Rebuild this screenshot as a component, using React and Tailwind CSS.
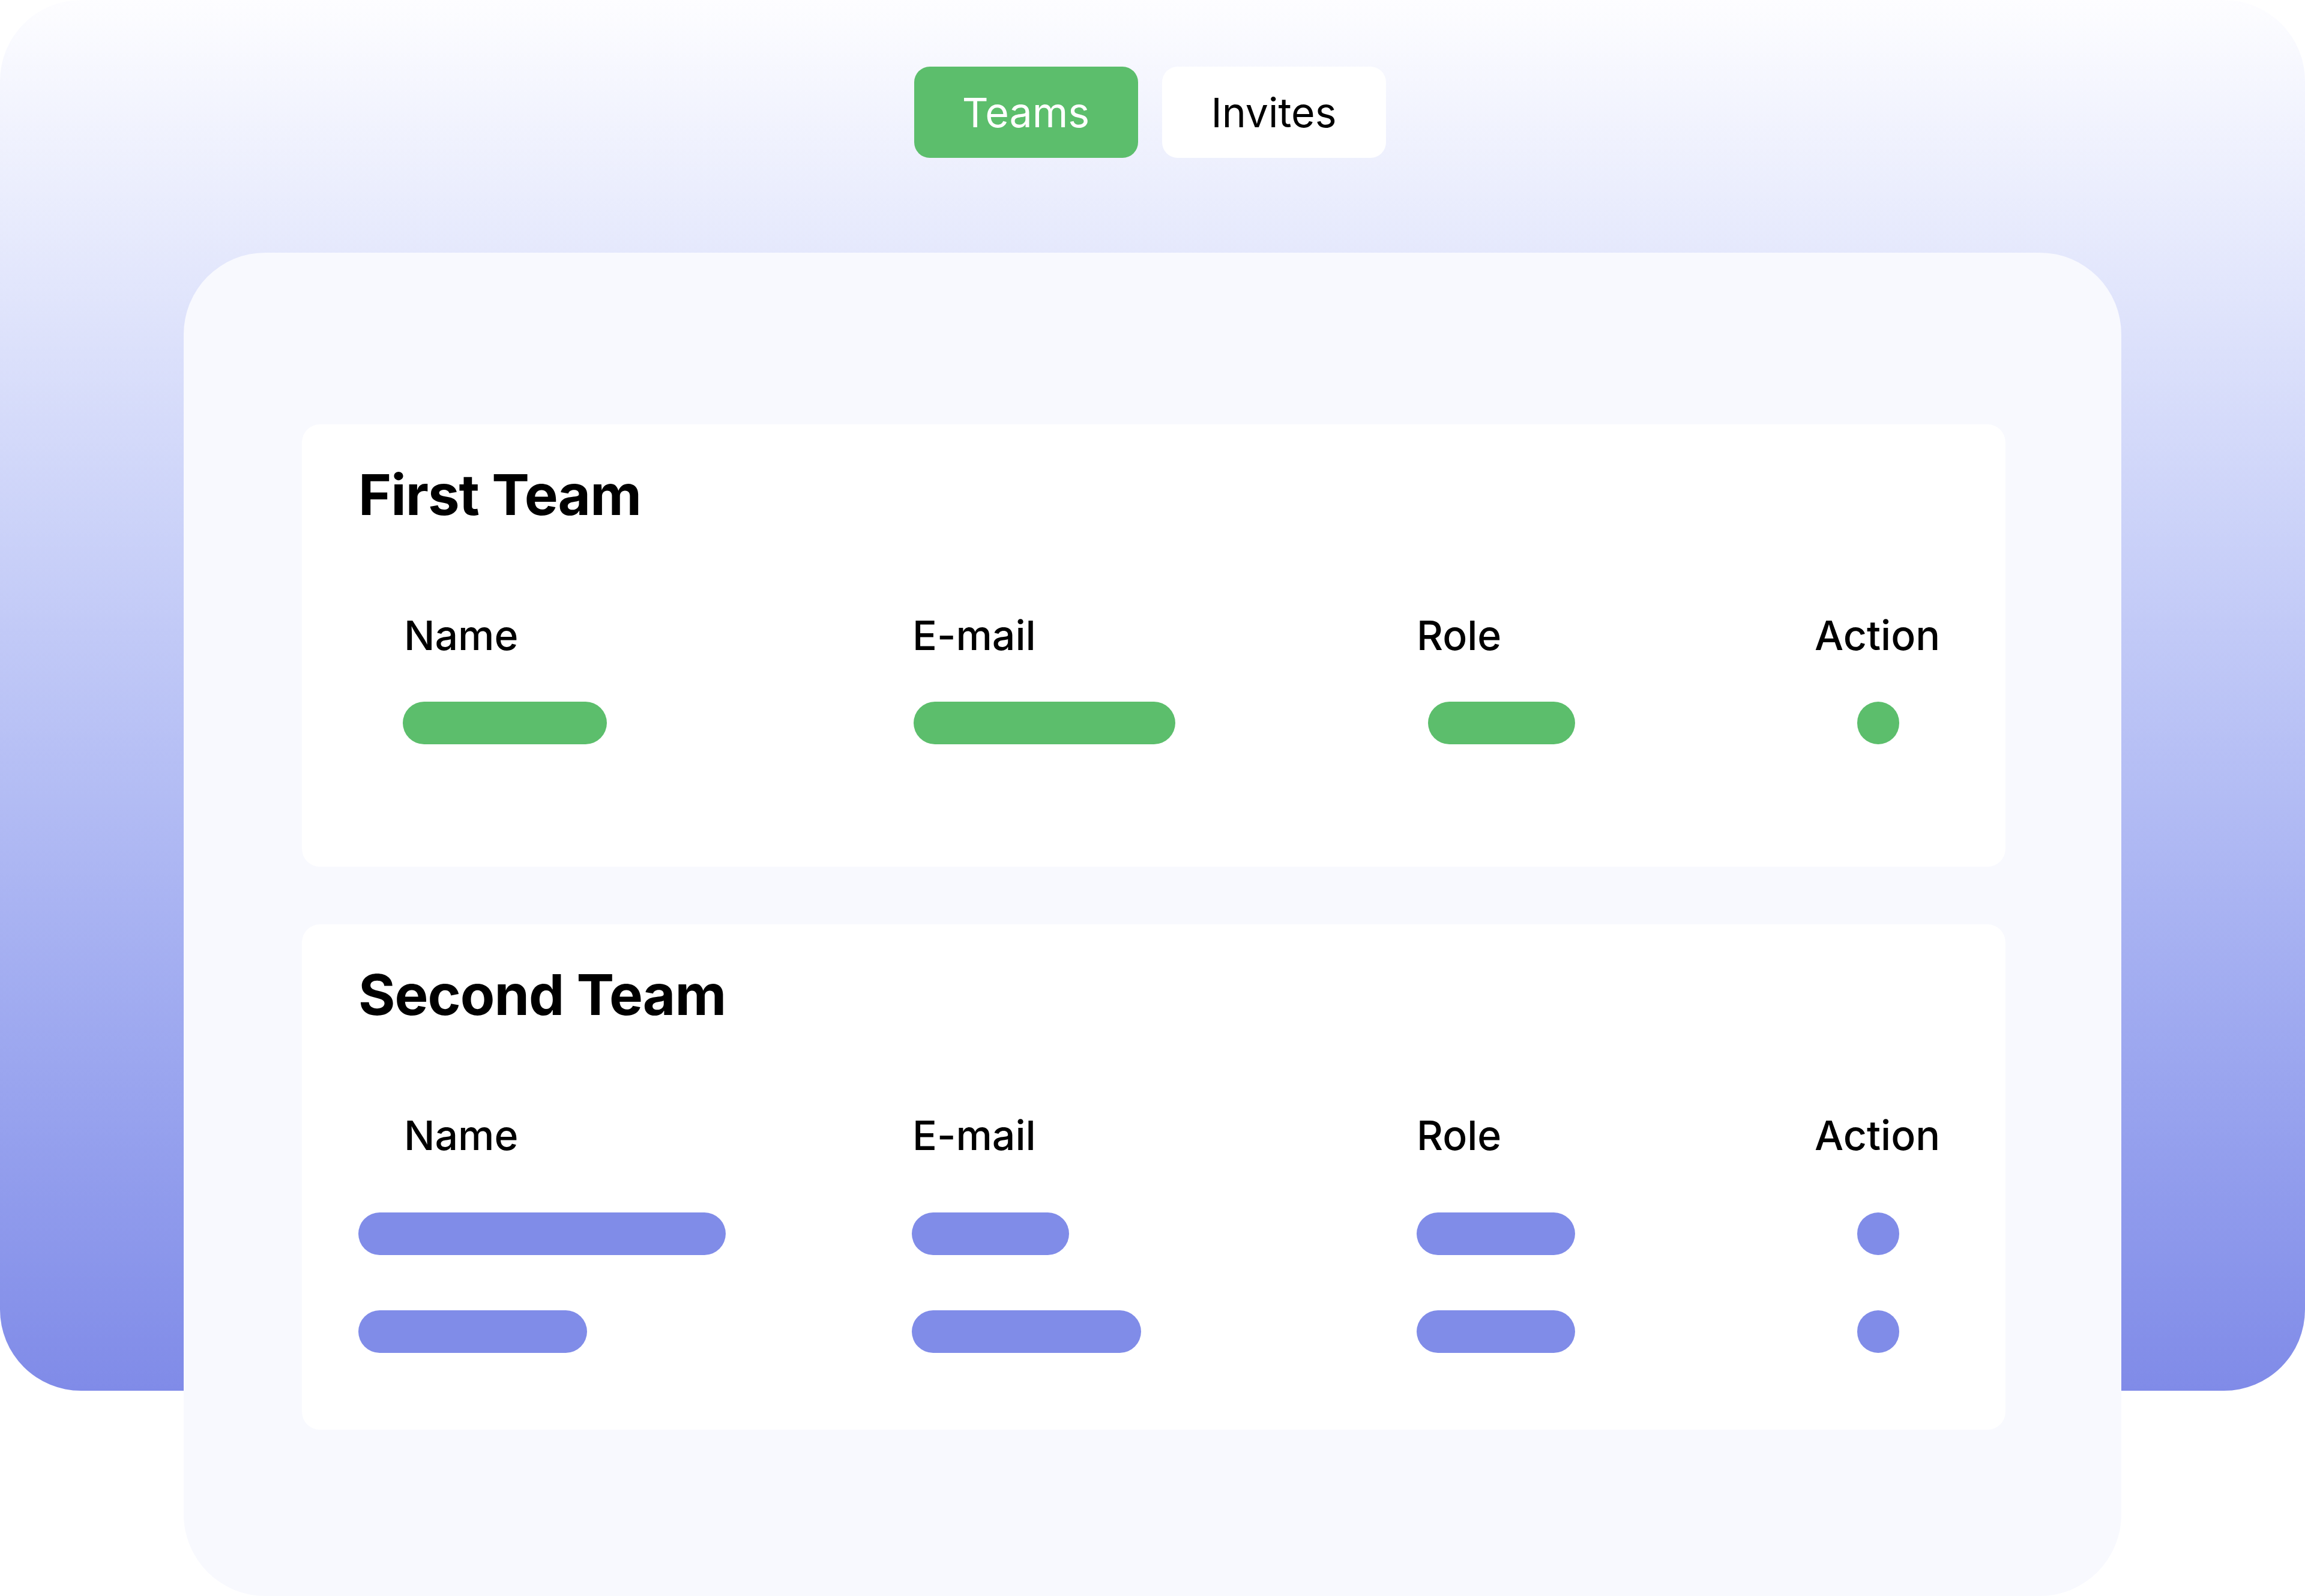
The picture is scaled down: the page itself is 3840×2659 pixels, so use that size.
import React from 'react';

const GREEN = 'bg-[#5cbe6c]';
const BLUE = 'bg-[#808ce8]';

function Bar({ width, color, offset = 0 }) {
  return <div className={`h-[71px] rounded-full ${color}`} style={{ width, marginLeft: offset }} />;
}

function Dot({ color }) {
  return <div className={`w-[70px] h-[71px] rounded-full ${color}`} />;
}

// one table row: fixed column widths so labels and bars line up
function Row({ cells, className = '' }) {
  return (
    <div className={`flex items-center ${className}`}>
      <div className="w-[920px] flex">{cells[0]}</div>
      <div className="w-[840px] flex">{cells[1]}</div>
      <div className="w-[664px] flex">{cells[2]}</div>
      <div className="w-[216px] flex justify-center">{cells[3]}</div>
    </div>
  );
}

function Header({ title }) {
  return (
    <>
      <h2 className="text-[94px] leading-none font-bold text-black tracking-[-1px]">{title}</h2>
      <Row
        className="mt-[153px] text-[68px] leading-none font-medium text-black"
        cells={[
          <span className="pl-[76px]">Name</span>,
          <span className="pl-[3px]">E-mail</span>,
          <span className="pl-[3px]">Role</span>,
          <span className="w-full text-left pl-[2px]">Action</span>,
        ]}
      />
    </>
  );
}

export default function App() {
  return (
    <div className="relative w-[3840px] h-[2659px] bg-white overflow-hidden" style={{ fontFamily: 'Inter, "Noto Sans", sans-serif' }}>
      {/* gradient backdrop behind the card */}
      <div className="absolute left-0 top-0 w-full h-[2317px] rounded-[135px] bg-gradient-to-b from-[#fdfdff] to-[#808be8]" />

      <div className="relative flex flex-col items-center pt-[111px]">
        <div className="flex gap-[40px] mr-[9px]">
          <button className={`w-[373px] h-[152px] rounded-[26px] ${GREEN} text-white text-[68px] leading-none`}>Teams</button>
          <button className="w-[373px] h-[152px] rounded-[26px] bg-white text-black text-[68px] leading-none">Invites</button>
        </div>

        <div className="mt-[158px] w-[3228px] h-[2238px] rounded-[136px] bg-[#f8f9fe] pt-[286px] pl-[197px] pr-[193px] flex flex-col gap-[96px]">
          <div className="h-[737px] bg-white rounded-[30px] pl-[94px] pt-[70px]">
            <Header title="First Team" />
            <Row
              className="mt-[77px]"
              cells={[
                <Bar width={340} color={GREEN} offset={74} />,
                <Bar width={436} color={GREEN} offset={5} />,
                <Bar width={245} color={GREEN} offset={22} />,
                <Dot color={GREEN} />,
              ]}
            />
          </div>

          <div className="h-[842px] bg-white rounded-[30px] pl-[94px] pt-[70px]">
            <Header title="Second Team" />
            <Row
              className="mt-[95px]"
              cells={[
                <Bar width={612} color={BLUE} />,
                <Bar width={262} color={BLUE} offset={2} />,
                <Bar width={264} color={BLUE} offset={3} />,
                <Dot color={BLUE} />,
              ]}
            />
            <Row
              className="mt-[92px]"
              cells={[
                <Bar width={381} color={BLUE} />,
                <Bar width={382} color={BLUE} offset={2} />,
                <Bar width={264} color={BLUE} offset={3} />,
                <Dot color={BLUE} />,
              ]}
            />
          </div>
        </div>
      </div>
    </div>
  );
}
